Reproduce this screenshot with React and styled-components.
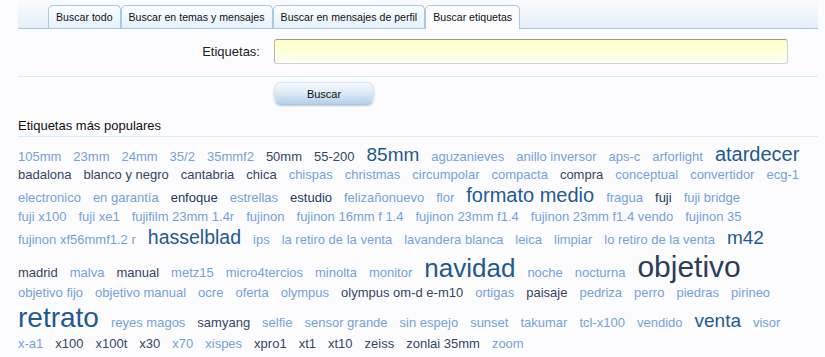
import React from "react";
import styled, { createGlobalStyle } from "styled-components";

const GlobalStyle = createGlobalStyle`
  html, body {
    margin: 0;
    padding: 0;
    background: #fcfcff;
  }
  body {
    font-family: "Liberation Sans", Arial, sans-serif;
    color: #222;
  }
`;

const Page = styled.div`
  padding: 0 7px 0 18px;
`;

// pestañas de búsqueda
const TabBar = styled.ul`
  display: flex;
  align-items: flex-start;
  margin: 0;
  padding: 5px 0 0 30px;
  height: 23px;
  list-style: none;
  border-bottom: 1px solid #a5cae4;
  background: linear-gradient(to bottom, #fcfcff 0%, #e2effa 100%);
`;

const Tab = styled.li`
  height: ${(p) => (p.$active ? "23px" : "22px")};
  padding: 0 7px;
  border: 1px solid #a5cae4;
  border-bottom: none;
  border-radius: 5px 5px 0 0;
  font-size: 10.6px;
  line-height: 22px;
  color: #111;
  background: ${(p) =>
    p.$active ? "#fcfcff" : "linear-gradient(to bottom, #fbfdff, #e4f1fc)"};
`;

const FormRow = styled.div`
  display: grid;
  grid-template-columns: 242px 514px;
  column-gap: 14px;
  align-items: center;
  padding: 10px 0 12px;
  border-bottom: 1px solid #d7edfc;
`;

const Label = styled.label`
  text-align: right;
  font-size: 13px;
  color: #222;
`;

const TextInput = styled.input`
  box-sizing: border-box;
  width: 514px;
  height: 25px;
  margin: 0;
  border: 1px solid #d2d2d2;
  border-top-color: #9a9a9a;
  border-left-color: #b5b5b5;
  border-radius: 3px;
  background: linear-gradient(to bottom, #ffffc4 0%, #fffff2 100%);
  outline: none;
`;

const ButtonRow = styled.div`
  padding: 5px 0 13px 256px;
`;

const Button = styled.button`
  display: block;
  width: 100px;
  height: 23px;
  margin: 0;
  border: 1px solid #d6e6f3;
  border-bottom-color: #a9c8e3;
  border-radius: 7px;
  background: linear-gradient(to bottom, #f6fafd 0%, #dbe9f5 50%, #b3d0ea 100%);
  box-shadow: 0 1px 2px rgba(0, 0, 0, 0.22);
  font-family: "Liberation Sans", Arial, sans-serif;
  font-size: 11px;
  color: #111;
`;

const SectionTitle = styled.h3`
  margin: 0;
  padding: 0 0 2px;
  font-size: 13px;
  font-weight: normal;
  line-height: 16px;
  color: #111;
  border-bottom: 1px solid #d7edfc;
`;

const TagCloud = styled.div`
  padding-top: 6px;
  font-size: 13px;
`;

const TagLine = styled.div`
  white-space: nowrap;
  line-height: 18px;
`;

const tagColors = {
  l: "#74a2d7",
  d: "#36455f",
  n: "#213a5e",
  b: "#1f5a8f",
  k: "#2d3d55",
};

const Tag = styled.a`
  margin-right: 12px;
  font-size: ${(p) => p.$size || 13}px;
  line-height: ${(p) => (p.$size ? 1.17 : "inherit")};
  color: ${(p) => tagColors[p.$kind]};
  text-decoration: none;
  cursor: pointer;
`;

const lines = [
  [
    ["105mm", "l"], ["23mm", "l"], ["24mm", "l"], ["35/2", "l"], ["35mmf2", "l"],
    ["50mm", "d"], ["55-200", "d"], ["85mm", "b", 19], ["aguzanieves", "l"],
    ["anillo inversor", "l"], ["aps-c", "l"], ["arforlight", "l"], ["atardecer", "b", 20],
  ],
  [
    ["badalona", "d"], ["blanco y negro", "d"], ["cantabria", "d"], ["chica", "d"],
    ["chispas", "l"], ["christmas", "l"], ["circumpolar", "l"], ["compacta", "l"],
    ["compra", "d"], ["conceptual", "l"], ["convertidor", "l"], ["ecg-1", "l"],
  ],
  [
    ["electronico", "l"], ["en garantía", "l"], ["enfoque", "n"], ["estrellas", "l"],
    ["estudio", "n"], ["felizañonuevo", "l"], ["flor", "l"], ["formato medio", "b", 20],
    ["fragua", "l"], ["fuji", "n"], ["fuji bridge", "l"],
  ],
  [
    ["fuji x100", "l"], ["fuji xe1", "l"], ["fujifilm 23mm 1.4r", "l"], ["fujinon", "l"],
    ["fujinon 16mm f 1.4", "l"], ["fujinon 23mm f1.4", "l"],
    ["fujinon 23mm f1.4 vendo", "l"], ["fujinon 35", "l"],
  ],
  [
    ["fujinon xf56mmf1.2 r", "l"], ["hasselblad", "b", 19.5], ["ips", "l"],
    ["la retiro de la venta", "l"], ["lavandera blanca", "l"], ["leica", "l"],
    ["limpiar", "l"], ["lo retiro de la venta", "l"], ["m42", "b", 19],
  ],
  [
    ["madrid", "d"], ["malva", "l"], ["manual", "d"], ["metz15", "l"],
    ["micro4tercios", "l"], ["minolta", "l"], ["monitor", "l"], ["navidad", "b", 26],
    ["noche", "l"], ["nocturna", "l"], ["objetivo", "k", 30],
  ],
  [
    ["objetivo fijo", "l"], ["objetivo manual", "l"], ["ocre", "l"], ["oferta", "l"],
    ["olympus", "l"], ["olympus om-d e-m10", "d"], ["ortigas", "l"], ["paisaje", "d"],
    ["pedriza", "l"], ["perro", "l"], ["piedras", "l"], ["pirineo", "l"],
  ],
  [
    ["retrato", "b", 28], ["reyes magos", "l"], ["samyang", "d"], ["selfie", "l"],
    ["sensor grande", "l"], ["sin espejo", "l"], ["sunset", "l"], ["takumar", "l"],
    ["tcl-x100", "l"], ["vendido", "l"], ["venta", "b", 19], ["visor", "l"],
  ],
  [
    ["x-a1", "l"], ["x100", "d"], ["x100t", "d"], ["x30", "d"], ["x70", "l"],
    ["xispes", "l"], ["xpro1", "d"], ["xt1", "d"], ["xt10", "d"], ["zeiss", "d"],
    ["zonlai 35mm", "d"], ["zoom", "l"],
  ],
];

const tabs = [
  "Buscar todo",
  "Buscar en temas y mensajes",
  "Buscar en mensajes de perfil",
  "Buscar etiquetas",
];

export default function App() {
  return (
    <Page>
      <GlobalStyle />
      <TabBar>
        {tabs.map((t, i) => (
          <Tab key={t} $active={i === tabs.length - 1}>
            {t}
          </Tab>
        ))}
      </TabBar>
      <FormRow>
        <Label htmlFor="tags">Etiquetas:</Label>
        <TextInput id="tags" type="text" />
      </FormRow>
      <ButtonRow>
        <Button type="button">Buscar</Button>
      </ButtonRow>
      <SectionTitle>Etiquetas más populares</SectionTitle>
      <TagCloud>
        {lines.map((line, i) => (
          <TagLine key={i}>
            {line.map(([text, kind, size]) => (
              <Tag key={text} $kind={kind} $size={size}>
                {text}
              </Tag>
            ))}
          </TagLine>
        ))}
      </TagCloud>
    </Page>
  );
}
